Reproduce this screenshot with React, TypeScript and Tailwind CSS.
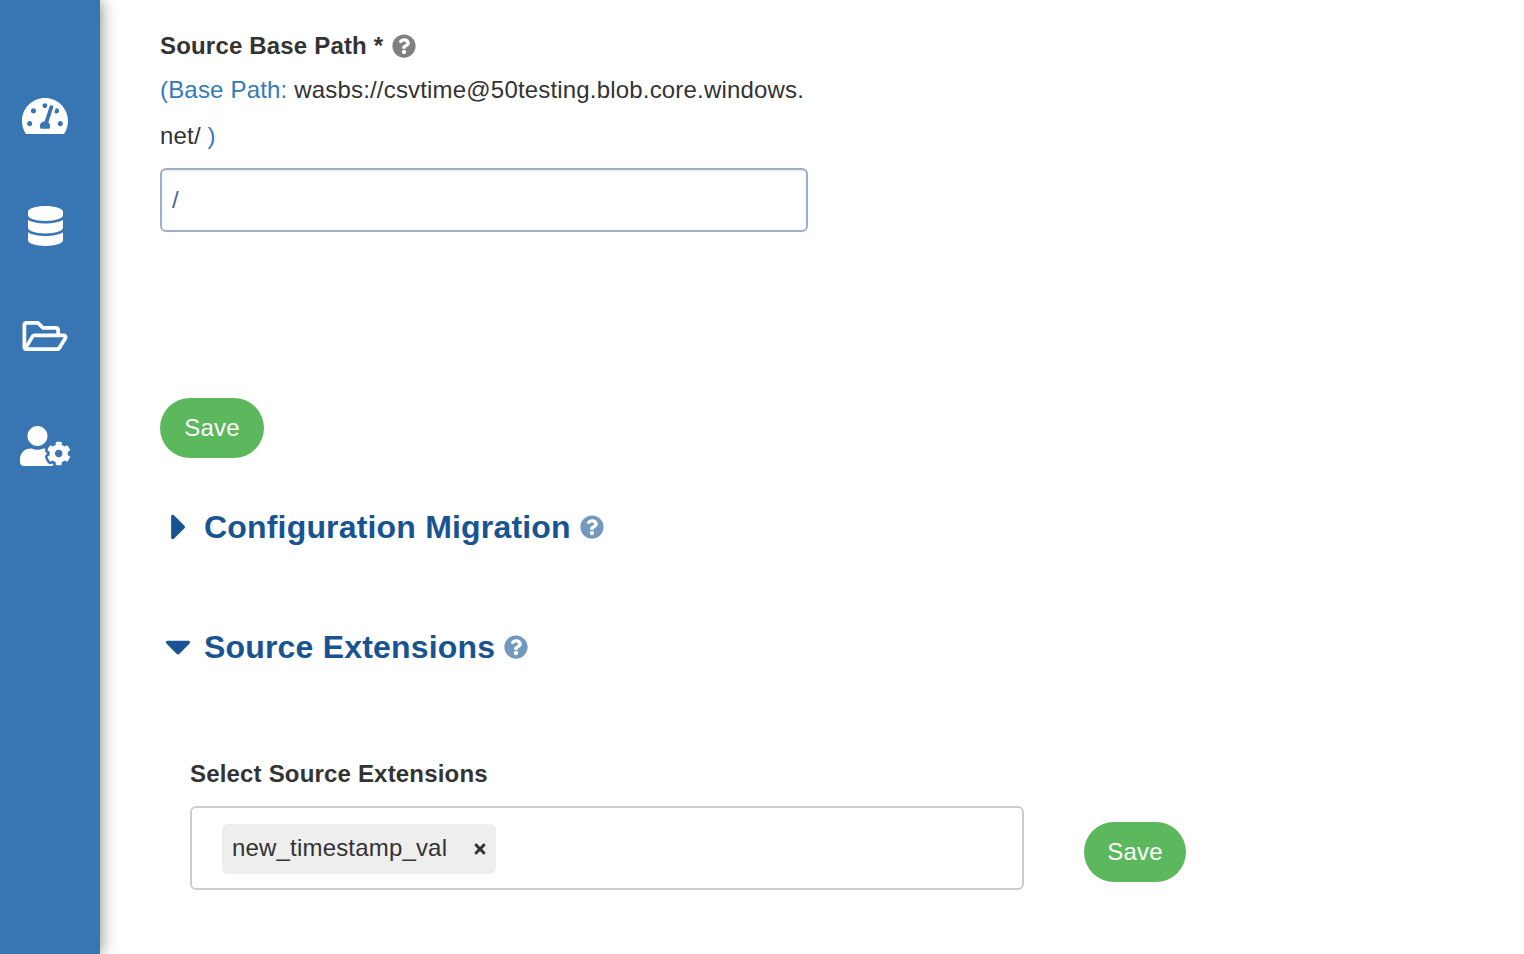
import { FaTachometerAlt, FaDatabase, FaRegFolderOpen, FaUserCog, FaQuestionCircle, FaCaretRight, FaCaretDown, FaTimes } from "react-icons/fa";

export default function App() {
  return (
    <div className="flex h-[954px] w-full overflow-hidden bg-white font-['Liberation_Sans',Arial,sans-serif] tracking-[0.18px] text-[#333]">
      <aside className="flex w-[100px] shrink-0 flex-col items-center bg-[#3776b3] pr-[10px] pt-[93px] shadow-[0_0_16px_rgba(0,0,0,0.5)]">
        <FaTachometerAlt className="h-[46px] w-[46px] text-white" />
        <FaDatabase className="mt-[67px] h-[40px] w-[35px] text-white" />
        <FaRegFolderOpen className="mt-[70px] h-[40px] w-[46px] text-white" />
        <FaUserCog className="mt-[70px] h-[40px] w-[50px] text-white" />
      </aside>
      <main className="flex-1 pl-[60px] pt-[30px]">
        <div className="flex h-8 items-center gap-[9px] text-2xl font-bold">
          <span>Source Base Path *</span>
          <FaQuestionCircle className="h-6 w-6 text-[#808080]" />
        </div>
        <p className="mt-[5px] w-[660px] text-2xl leading-[46px] text-[#337ab7]">
          (Base Path: <span className="text-[#333]">wasbs://csvtime@50testing.blob.core.windows.<br />net/</span> )
        </p>
        <div className="mt-[9px] flex h-16 w-[648px] items-center rounded-md border-2 border-[#9db1c6] px-[10px] text-2xl text-[#46688c] shadow-[inset_0_1px_2px_rgba(0,0,0,0.1)]">/</div>
        <button className="mt-[166px] block h-[60px] w-[104px] rounded-full bg-[#5cb85c] text-2xl text-white">Save</button>
        <div className="mt-[49px] flex h-10 items-center text-[32px] font-bold text-[#185491]">
          <span className="flex w-11 justify-start pl-[11px]"><FaCaretRight className="h-[42px] w-4" /></span>
          <span>Configuration Migration</span>
          <FaQuestionCircle className="ml-[9px] h-6 w-6 text-[#7499bf]" />
        </div>
        <div className="mt-[80px] flex h-10 items-center text-[32px] font-bold text-[#185491]">
          <span className="flex w-11 justify-start pl-[5px]"><FaCaretDown className="-mt-[2px] h-[42px] w-[26px]" /></span>
          <span>Source Extensions</span>
          <FaQuestionCircle className="ml-[9px] h-6 w-6 text-[#7499bf]" />
        </div>
        <div className="mt-[91px] pl-[30px]">
          <div className="text-2xl font-bold">Select Source Extensions</div>
          <div className="mt-[16px] flex items-start">
            <div className="flex h-[84px] w-[834px] items-start rounded-md border-2 border-[#ccc] pl-[30px] pt-4">
              <div className="flex h-[50px] w-[274px] items-center justify-between rounded-md bg-[#eee] pl-[10px] pr-[9px] text-2xl">
                <span className="-mt-[2px]">new_timestamp_val</span>
                <FaTimes className="h-4 w-[14px]" />
              </div>
            </div>
            <button className="ml-[60px] mt-4 h-[60px] w-[102px] rounded-full bg-[#5cb85c] text-2xl text-white">Save</button>
          </div>
        </div>
      </main>
    </div>
  );
}
